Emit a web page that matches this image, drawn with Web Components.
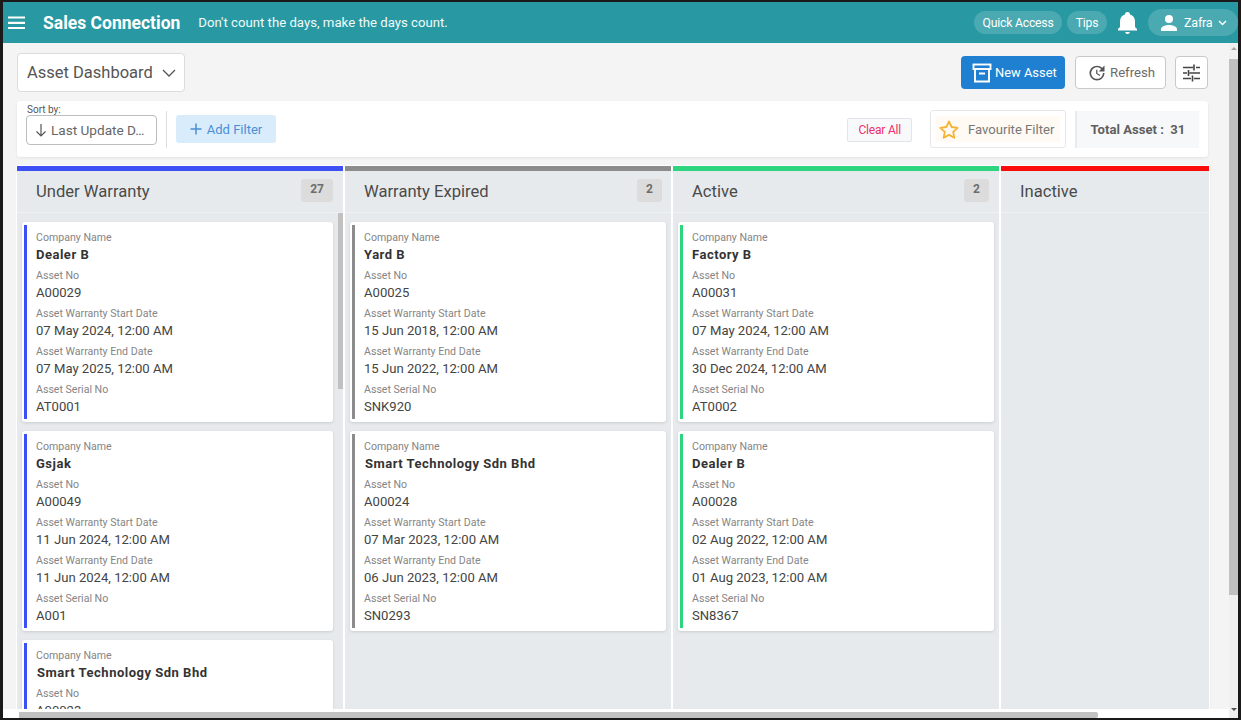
<!DOCTYPE html>
<html><head><meta charset="utf-8"><style>
html,body{margin:0;padding:0;background:#fff;overflow:hidden}
body{font-family:Roboto,"Liberation Sans",sans-serif;width:1241px;height:722px}
</style></head><body>
<app-shell>
  <top-bar slot="top"></top-bar>
  <page-title slot="main"></page-title>
  <filter-bar slot="main"></filter-bar>
  <kanban-board slot="main">
    <kanban-col name="Under Warranty" count="27" color="#3d50f5" bar>
      <asset-card company="Dealer B" no="A00029" start="07 May 2024, 12:00 AM" end="07 May 2025, 12:00 AM" serial="AT0001"></asset-card>
      <asset-card company="Gsjak" no="A00049" start="11 Jun 2024, 12:00 AM" end="11 Jun 2024, 12:00 AM" serial="A001"></asset-card>
      <asset-card wide company="Smart Technology Sdn Bhd" no="A00023"></asset-card>
    </kanban-col>
    <kanban-col name="Warranty Expired" count="2" color="#8c8c8c" tight>
      <asset-card company="Yard B" no="A00025" start="15 Jun 2018, 12:00 AM" end="15 Jun 2022, 12:00 AM" serial="SNK920"></asset-card>
      <asset-card wide company="Smart Technology Sdn Bhd" no="A00024" start="07 Mar 2023, 12:00 AM" end="06 Jun 2023, 12:00 AM" serial="SN0293"></asset-card>
    </kanban-col>
    <kanban-col name="Active" count="2" color="#2fd47f">
      <asset-card company="Factory B" no="A00031" start="07 May 2024, 12:00 AM" end="30 Dec 2024, 12:00 AM" serial="AT0002"></asset-card>
      <asset-card company="Dealer B" no="A00028" start="02 Aug 2022, 12:00 AM" end="01 Aug 2023, 12:00 AM" serial="SN8367"></asset-card>
    </kanban-col>
    <kanban-col name="Inactive" color="#fb0a0a" narrow></kanban-col>
  </kanban-board>
</app-shell>
<script>
const def=(n,html)=>customElements.define(n,class extends HTMLElement{
  connectedCallback(){ if(this.shadowRoot)return; const r=this.attachShadow({mode:'open'}); r.innerHTML=typeof html==='function'?html(this):html; }
});
def('app-shell',`<style>
:host{display:block;box-sizing:border-box;width:1241px;height:720px;border:solid #1a1a1a;border-width:2px 3px 2px 3px;position:relative;overflow:hidden;background:#f4f4f4}
.wrap{display:flex;flex-direction:column;height:100%}
main{flex:1;min-height:0;padding:10px 0 0 14px;width:1191px;display:flex;flex-direction:column}
.v{position:absolute;right:0;top:41px;bottom:0;width:9px;background:#f1f1f1}
.v i{position:absolute;left:0;right:0;top:16px;height:536px;background:#c1c1c1}
.v b,.v u{position:absolute;left:2px;width:0;height:0;border:solid transparent;border-width:0 3px}
.v b{top:4px;border-bottom:3px solid #a5a5a5}
.v u{bottom:7px;border-top:3px solid #505050}
.h{position:absolute;left:0;right:9px;bottom:0;height:9px;background:#fff}
.h i{position:absolute;left:16px;width:1079px;top:3px;height:6px;background:#c1c1c1;border-radius:0 2px 2px 0}
</style><div class="wrap"><slot name="top"></slot><main><slot name="main"></slot></main></div>
<div class="h"><i></i></div><div class="v"><b></b><i></i><u></u></div>`);

def('top-bar',`<style>
:host{display:flex;align-items:center;height:41px;background:#2899a3;color:#fff;flex:none;font-family:Roboto,"Liberation Sans",sans-serif}
.m{margin-left:4px;display:flex}
h1{font-size:17.5px;font-weight:700;margin:0 0 0 17px;white-space:nowrap}
p{font-size:13.2px;margin:0 0 0 18px;color:#f0fafa;white-space:nowrap}
.sp{flex:1}
.pill{background:rgba(255,255,255,.16);border-radius:12px;height:23px;display:flex;align-items:center;justify-content:center;font-size:12.2px;letter-spacing:-.2px;box-sizing:border-box}
.qa{width:88px}.tp{width:40px;margin-left:5px}
.bell{margin:0 11px;display:flex}
.user{background:rgba(255,255,255,.16);border-radius:14px;height:27px;display:flex;align-items:center;padding:0 0 0 13px;font-size:12.5px;width:90px;box-sizing:border-box;letter-spacing:-.2px}
.user span{margin:0 6px 0 7px}
</style>
<span class="m"><svg width="19" height="16" viewBox="0 0 19 16"><path d="M1 2.500h17M1 7.800h17M1 13h17" stroke="#fff" stroke-width="2.200" fill="none"/></svg></span>
<h1>Sales Connection</h1><p>Don't count the days, make the days count.</p><div class="sp"></div>
<div class="pill qa">Quick Access</div><div class="pill tp">Tips</div>
<div class="bell"><svg width="19" height="22" viewBox="0 0 19 22" fill="#fff"><path d="M9.500 22c1.300 0 2.300-.9 2.300-2H7.200c0 1.100 1 2 2.300 2zM17 15V9.500c0-3.400-1.800-6.100-5-6.900V2a2.500 2 0 0 0-5 0v.6C3.800 3.400 2 6.100 2 9.500V15l-2 2v1.500h19V17z"/></svg></div>
<div class="user"><svg width="16" height="16" viewBox="0 0 16 16" fill="#fff"><circle cx="8" cy="4" r="4"/><path d="M0 16v-2c0-2.700 5.300-4 8-4s8 1.300 8 4v2z"/></svg><span>Zafra</span><svg width="9" height="6" viewBox="0 0 9 6"><path d="M1 1l3.500 3.500L8 1" stroke="#fff" stroke-width="1.500" fill="none"/></svg></div>`);

def('page-title',`<style>
:host{display:flex;align-items:flex-start;flex:none;height:48px;font-family:Roboto,"Liberation Sans",sans-serif}
.dd{width:168px;height:39px;box-sizing:border-box;border:1px solid #dcdcdc;border-radius:4px;background:#fff;display:flex;align-items:center;padding-left:9px;font-size:16.500px;color:#555;gap:9px;white-space:nowrap}
.sp{flex:1}
.btn{height:33px;box-sizing:border-box;border-radius:4px;display:flex;align-items:center;font-size:13.200px;margin-top:3px;white-space:nowrap}
.new{background:#1f7fd1;color:#fff;width:104px;padding-left:11px;gap:3px;font-size:12.900px}
.ref{background:#fff;border:1px solid #c9c9c9;color:#6b6b6b;width:91px;margin-left:10px;padding-left:11px;gap:3px}
.tune{background:#fff;border:1px solid #c9c9c9;width:33px;margin-left:9px;justify-content:center}
</style>
<div class="dd">Asset Dashboard <svg width="14" height="8" viewBox="0 0 14 8"><path d="M1 1l6 6 6-6" stroke="#555" stroke-width="1.300" fill="none"/></svg></div><div class="sp"></div>
<div class="btn new"><svg width="20" height="20" viewBox="0 0 20 20" fill="none" stroke="#fff" stroke-width="1.900"><rect x="1.500" y="1.500" width="17" height="4.500"/><path d="M3 6v12.500h14V6M7 10.500h6"/></svg>New Asset</div>
<div class="btn ref"><svg width="20" height="20" viewBox="0 0 24 24" fill="#555"><path d="M21 10.120h-6.780l2.740-2.820c-2.730-2.700-7.150-2.800-9.880-.1-2.730 2.710-2.730 7.080 0 9.790s7.150 2.710 9.880 0C18.320 15.650 19 14.080 19 12.100h2c0 1.980-.88 4.550-2.640 6.290-3.510 3.480-9.210 3.480-12.720 0-3.500-3.470-3.530-9.110-.02-12.580s9.140-3.470 12.650 0L21 3v7.120zM12.500 8v4.250l3.500 2.080-.72 1.210L11 13V8h1.500z"/></svg>Refresh</div>
<div class="btn tune"><svg width="19" height="18" viewBox="0 0 19 18" fill="none" stroke="#444" stroke-width="1.600"><path d="M1 3.500h10M14 3.500h4M12 .5v6M1 9h4M7.500 9h10.500M6.500 6v6M1 14.500h8M12 14.500h6M10.500 11.500v6"/></svg></div>`);

def('filter-bar',`<style>
:host{display:flex;align-items:center;flex:none;width:1191px;height:56px;box-sizing:border-box;background:#fff;border-radius:3px;box-shadow:0 1px 3px rgba(0,0,0,.08);padding:0 9px;font-family:Roboto,"Liberation Sans",sans-serif}
.sort{display:flex;flex-direction:column;width:131px;font-size:10px;color:#555;align-self:flex-start;padding-top:3px}
.sort label{line-height:11px;padding-left:1px}
.sel{height:30px;box-sizing:border-box;border:1px solid #bdbdbd;border-radius:4px;display:flex;align-items:center;padding-left:8px;font-size:13.600px;color:#666;gap:4px;white-space:nowrap;overflow:hidden}
.div{width:1px;height:37px;background:#ddd;margin:0 9px}
.add{background:#d9ecfb;color:#4a8fd6;height:28px;width:100px;border-radius:3px;display:flex;align-items:center;justify-content:center;font-size:13px;gap:5px}
.sp{flex:1}
.clear{height:24px;box-sizing:border-box;border:1px solid #e2e4e8;border-radius:2px;background:#f8f9fa;color:#ee2f6c;font-size:12px;padding:0 10px;display:flex;align-items:center;letter-spacing:-.2px;margin-top:2px}
.fav{margin-left:18px;width:136px;height:38px;box-sizing:border-box;border:1px solid #e7e7e7;border-radius:3px;padding:5px;display:flex}
.fav div{flex:1;background:#fffaf3;display:flex;align-items:center;gap:9px;font-size:13.100px;color:#777;padding-left:3px;white-space:nowrap}
.tot{margin-left:9px;width:124px;height:37px;box-sizing:border-box;background:#f7f8fa;border-left:2px solid #e9ebee;display:flex;align-items:center;justify-content:center;font-size:13.100px;font-weight:700;color:#5f5f5f;white-space:pre}
</style>
<div class="sort"><label>Sort by:</label><div class="sel"><svg width="12" height="14" viewBox="0 0 12 14" fill="none" stroke="#555" stroke-width="1.200" style="flex:none"><path d="M6 1v12M1.500 8.500L6 13l4.500-4.500"/></svg>Last Update D…</div></div>
<div class="div"></div>
<div class="add"><svg width="12" height="12" viewBox="0 0 12 12"><path d="M6 .5v11M.5 6h11" stroke="#4a8fd6" stroke-width="1.500"/></svg>Add Filter</div>
<div class="sp"></div>
<div class="clear">Clear All</div>
<div class="fav"><div><svg width="20" height="19" viewBox="0 0 20 19" fill="none" stroke="#f5b335" stroke-width="1.800" stroke-linejoin="round"><path d="M10 1.500l2.600 5.500 6 .8-4.400 4.100 1.100 5.900L10 14.900l-5.300 2.900 1.100-5.900L1.400 7.800l6-.8z"/></svg>Favourite Filter</div></div>
<div class="tot">Total Asset :  31</div>`);

def('kanban-board',`<style>
:host{display:flex;flex:1;min-height:0;gap:2px;margin-top:9px;width:1192px;margin-bottom:9px}
</style><slot></slot>`);

def('kanban-col',h=>{
 const n=h.hasAttribute('narrow'), c=h.getAttribute('color'), cnt=h.getAttribute('count'), b=h.hasAttribute('bar');
 return `<style>
:host{display:block;width:${n?208:326}px;flex:none;background:#e7eaed;border-top:5px solid ${c};box-sizing:border-box;position:relative;overflow:hidden;box-shadow:${n?'1px 0 2px rgba(0,0,0,.06)':'none'};--accent:${c};font-family:Roboto,"Liberation Sans",sans-serif;outline:1px solid #fff}
header{height:42px;box-sizing:border-box;border-bottom:1px solid #eef0f2;display:flex;align-items:center;justify-content:space-between;padding:0 ${h.hasAttribute('tight')?9:10}px 0 19px;font-size:16.600px;color:#4a4a4a}
header b{font-weight:700;font-size:12px;background:#dcdcdc;color:#6d6d6d;min-width:25px;padding:3px 9px 0;height:23px;box-sizing:border-box;border-radius:3px;display:flex;align-items:flex-start;justify-content:center;margin-top:-2px}
.list{padding:9px ${b?10:5}px 0 5px;display:flex;flex-direction:column;gap:9px}
.bar{position:absolute;right:0;top:42px;width:5px;height:176px;background:#c1c1c1}
</style><header><span>${h.getAttribute('name')}</span>${cnt?`<b>${cnt}</b>`:''}</header><div class="list"><slot></slot></div>${b?'<div class="bar"></div>':''}`;
});

def('asset-card',h=>{
 const a=k=>h.getAttribute(k);
 const f=(l,k)=>a(k)?`<card-field label="${l}">${a(k)}</card-field>`:'';
 return `<style>
:host{display:block;background:#fff;border-radius:3px;box-shadow:0 1px 3px rgba(0,0,0,.12);padding:3px 0 3px 2px;flex:none}
.in{border-left:3px solid var(--accent);padding:4px 0 0 9px;height:194px;box-sizing:border-box;overflow:hidden}
</style><div class="in">
<card-field label="Company Name" strong ${h.hasAttribute('wide')?'wide':''}>${a('company')}</card-field>
${f('Asset No','no')}${f('Asset Warranty Start Date','start')}${f('Asset Warranty End Date','end')}${f('Asset Serial No','serial')}</div>`;
});

def('card-field',h=>`<style>
:host{display:block;height:38px;font-family:Roboto,"Liberation Sans",sans-serif}
small{display:block;font-size:10.600px;line-height:13px;color:#858585;height:14px;padding-top:2px}
div{font-size:13.100px;line-height:20px;color:#444;white-space:nowrap;${h.hasAttribute('strong')?'font-weight:700;color:#333;font-size:13px;letter-spacing:.5px;line-height:19px;':''}${h.hasAttribute('wide')?'padding-left:1px;':''}}
</style><small>${h.getAttribute('label')}</small><div><slot></slot></div>`);
</script>
</body></html>
